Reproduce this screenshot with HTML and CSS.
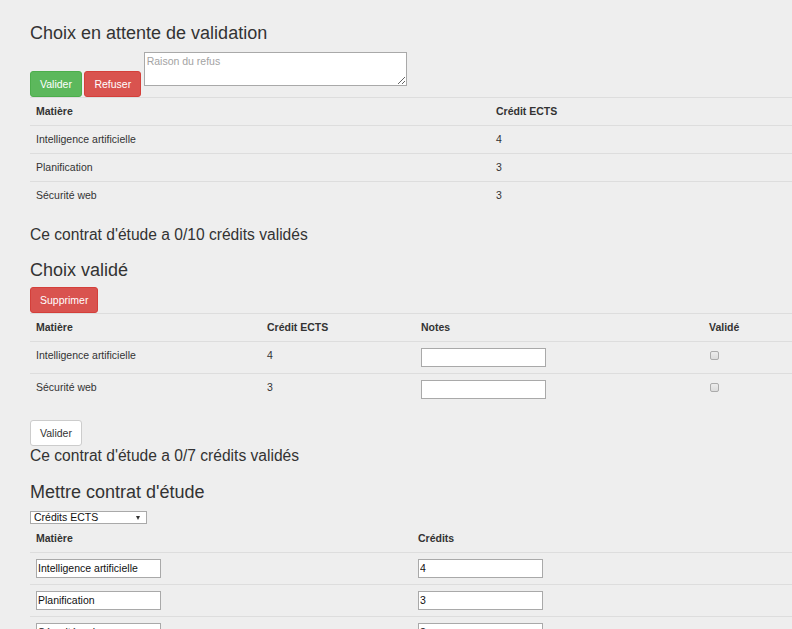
FILE: index.html
```html
<!DOCTYPE html>
<html lang="fr">
<head>
<meta charset="utf-8">
<title>Contrat d'étude</title>
<link rel="stylesheet" href="styles.css">
</head>
<body>
<div class="page">
  <h3 class="title first">Choix en attente de validation</h3>
  <div class="actions">
    <button class="btn btn-success" type="button">Valider</button>
    <button class="btn btn-danger" type="button">Refuser</button>
    <textarea class="reason" placeholder="Raison du refus"></textarea>
  </div>
  <table class="table t1">
    <colgroup><col class="w460"><col></colgroup>
    <tr><th>Matière</th><th>Crédit ECTS</th></tr>
    <tr><td>Intelligence artificielle</td><td>4</td></tr>
    <tr><td>Planification</td><td>3</td></tr>
    <tr><td>Sécurité web</td><td>3</td></tr>
  </table>
  <p class="summary s1">Ce contrat d'étude a 0/10 crédits validés</p>

  <h3 class="title t-valid">Choix validé</h3>
  <div class="btn-row r-del">
    <button class="btn btn-danger" type="button">Supprimer</button>
  </div>
  <table class="table t2">
    <colgroup><col class="w231"><col class="w154"><col class="w288"><col></colgroup>
    <tr><th>Matière</th><th>Crédit ECTS</th><th>Notes</th><th>Validé</th></tr>
    <tr><td>Intelligence artificielle</td><td>4</td><td><input class="field" type="text"></td><td><input class="check" type="checkbox"></td></tr>
    <tr><td>Sécurité web</td><td>3</td><td><input class="field" type="text"></td><td><input class="check" type="checkbox"></td></tr>
  </table>
  <div class="btn-row r-val">
    <button class="btn btn-default" type="button">Valider</button>
  </div>
  <p class="summary s2">Ce contrat d'étude a 0/7 crédits validés</p>

  <h3 class="title t-put">Mettre contrat d'étude</h3>
  <div class="select-wrap">
    <select class="select"><option>Crédits ECTS</option></select>
  </div>
  <table class="table t3">
    <colgroup><col class="w382"><col></colgroup>
    <tr class="head-row"><th>Matière</th><th>Crédits</th></tr>
    <tr><td><input class="field" type="text" value="Intelligence artificielle"></td><td><input class="field" type="text" value="4"></td></tr>
    <tr><td><input class="field" type="text" value="Planification"></td><td><input class="field" type="text" value="3"></td></tr>
    <tr><td><input class="field" type="text" value="Sécurité web"></td><td><input class="field" type="text" value="3"></td></tr>
  </table>
</div>
</body>
</html>
```

FILE: styles.css
```css
html, body {
  margin: 0;
  padding: 0;
  background: #eeeeee;
  overflow: hidden;
}

body {
  font-family: "Liberation Sans", Arial, sans-serif;
  font-size: 10.5px;
  line-height: 15px;
  color: #333333;
}

.page {
  padding-left: 30px;
}

.title {
  margin: 0;
  font-size: 18px;
  font-weight: normal;
  line-height: 20px;
  color: #333333;
}

.title.first { margin-top: 23px; }
.title.t-valid { margin-top: 16px; }
.title.t-put { margin-top: 17px; }

.summary {
  margin: 0;
  font-size: 15.6px;
  line-height: 18px;
  color: #333333;
}

.summary.s1 { margin-top: 17px; }
.summary.s2 { margin-top: 1px; }

.actions {
  margin-top: 9px;
  display: flex;
  align-items: flex-end;
  gap: 2.5px;
}

.btn {
  box-sizing: border-box;
  height: 26px;
  padding: 0 9px;
  font-family: "Liberation Sans", Arial, sans-serif;
  font-size: 10.5px;
  line-height: 24px;
  font-weight: normal;
  border: 1px solid transparent;
  border-radius: 3px;
  cursor: pointer;
  display: inline-block;
  vertical-align: top;
}

.btn-success {
  background: #5cb85c;
  border-color: #4cae4c;
  color: #ffffff;
}

.btn-danger {
  background: #d9534f;
  border-color: #d43f3a;
  color: #ffffff;
}

.btn-default {
  background: #ffffff;
  border-color: #cccccc;
  color: #333333;
}

.reason {
  box-sizing: border-box;
  width: 263px;
  height: 34px;
  margin: 0 0 11px 0;
  padding: 2px 2px;
  border: 1px solid #a9a9a9;
  background: #ffffff;
  font-family: "Liberation Sans", Arial, sans-serif;
  font-size: 10.5px;
  line-height: 13px;
  color: #333333;
}

.reason::placeholder {
  color: #a3a3a3;
}

.btn-row.r-del { margin-top: 7px; height: 26px; }
.btn-row.r-val { margin-top: 15px; height: 26px; }

.table {
  width: 762px;
  table-layout: fixed;
  border-collapse: separate;
  border-spacing: 0;
}

.table th,
.table td {
  padding: 6px;
  border-top: 1px solid #dddddd;
  text-align: left;
  vertical-align: top;
  line-height: 15px;
  font-size: 10.5px;
}

.table th {
  font-weight: bold;
}

.t3 .head-row th {
  border-top-color: transparent;
}

.w460 { width: 460px; }
.w231 { width: 231px; }
.w154 { width: 154px; }
.w288 { width: 288px; }
.w382 { width: 382px; }

.field {
  display: block;
  box-sizing: border-box;
  width: 125px;
  height: 19px;
  margin: 0;
  padding: 0 1px 1px 1px;
  border: 1px solid #a9a9a9;
  background: #ffffff;
  font-family: "Liberation Sans", Arial, sans-serif;
  font-size: 10.5px;
  line-height: 15px;
  color: #111111;
  outline: none;
}

.check {
  -webkit-appearance: none;
  appearance: none;
  display: block;
  box-sizing: border-box;
  width: 9px;
  height: 9px;
  margin: 3px 0 0 1px;
  border: 1px solid #ababab;
  border-radius: 2px;
  background: linear-gradient(#ececec, #dcdcdc);
}

.select-wrap {
  position: relative;
  margin-top: 9px;
  width: 117px;
  height: 13px;
}

.select {
  -webkit-appearance: none;
  appearance: none;
  box-sizing: border-box;
  display: block;
  width: 117px;
  height: 13px;
  margin: 0;
  padding: 0 0 0 3px;
  border: 1px solid #a9a9a9;
  border-radius: 0;
  background: #ffffff;
  font-family: "Liberation Sans", Arial, sans-serif;
  font-size: 10.5px;
  line-height: 11px;
  color: #111111;
}

.select-wrap::after {
  content: "";
  position: absolute;
  left: 106px;
  top: 5px;
  border-left: 2.5px solid transparent;
  border-right: 2.5px solid transparent;
  border-top: 4px solid #333333;
  pointer-events: none;
}
```
